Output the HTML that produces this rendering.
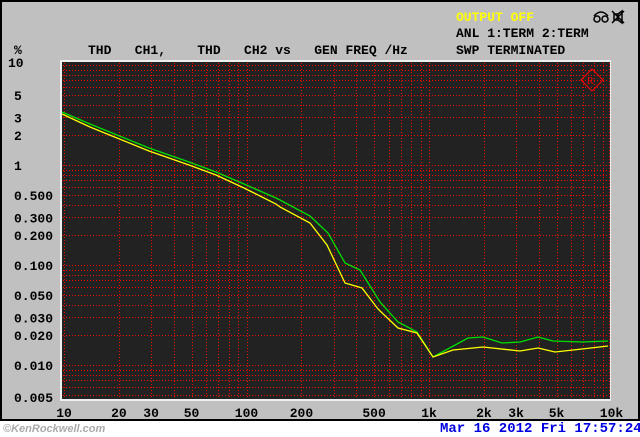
<!DOCTYPE html>
<html><head><meta charset="utf-8"><style>
html,body{margin:0;padding:0;width:640px;height:436px;overflow:hidden;background:#fff}
.t{position:absolute;font-family:"Liberation Mono",monospace;font-weight:bold;font-size:13px;color:#000;white-space:pre;line-height:14px}
</style></head><body>
<div style="position:absolute;left:0;top:0;width:640px;height:421px;background:#000"></div>
<div style="position:absolute;left:2px;top:2px;width:636px;height:417px;background:#c0c0c0"></div>
<svg id="s" width="640" height="436" style="position:absolute;left:0;top:0"></svg>
<div class="t" style="left:456px;top:11px;color:#ffff00">OUTPUT OFF</div>
<div class="t" style="left:456px;top:27px">ANL 1:TERM 2:TERM</div>
<div class="t" style="left:456px;top:44px">SWP TERMINATED</div>
<div class="t" style="left:88px;top:44px">THD   CH1,    THD   CH2 vs   GEN FREQ /Hz</div>
<div class="t" style="left:14px;top:44px">%</div>
<div class="t" style="left:440px;top:422px;color:#0000e0;font-size:14px">Mar 16 2012 Fri 17:57:24</div>
<div class="t" style="left:3px;top:422px;color:#aaa;font-style:italic;font-size:11px;font-family:'Liberation Sans',sans-serif">©KenRockwell.com</div>
<script>
var s=document.getElementById('s'),h='';
function X(f){return 64+182.5*Math.log10(f/10)}
function Y(v){return 65+100*(1-Math.log10(v))}
h+='<defs><pattern id="pv" width="1" height="3" patternUnits="userSpaceOnUse"><rect width="1" height="1" fill="#f00"/></pattern><pattern id="ph" width="3" height="1" patternUnits="userSpaceOnUse"><rect width="1" height="1" fill="#f00"/></pattern></defs>';
h+='<rect x="60" y="60" width="551" height="341" fill="#eee"/><rect x="62" y="62" width="548" height="337" fill="#222"/>';
var fs=[];for(var d=10;d<=1000;d*=10)for(var k=1;k<=9;k++)fs.push(d*k);fs.push(10000);
fs.forEach(function(f){var x=Math.min(609,Math.round(X(f)));h+='<rect x="'+x+'" y="63" width="1" height="336" fill="url(#pv)"/>'});
var vs=[];[0.001,0.01,0.1,1].forEach(function(d){for(var k=1;k<=9;k++){var v=d*k;if(v>=0.005)vs.push(v)}});vs.push(10);
vs.forEach(function(v){var y=Math.min(397,Math.round(Y(v)));h+='<rect x="63" y="'+y+'" width="546" height="1" fill="url(#ph)"/>'});
var g=[[62,112],[90,124],[117,135],[149,148],[189,162],[216,172],[244,184],[276,198],[280,200],[310,216],[328,233],[345,263],[360,270],[380,302],[398,322],[417,332],[433,357],[468,338],[483,337],[502,343],[520,342],[538,337],[553,341],[582,342],[608,341]];
var yl=[[62,114],[90,127],[117,138],[149,151],[189,165],[216,175],[244,188],[276,204],[280,207],[310,223],[327,245],[345,283],[362,288],[378,309],[398,328],[417,333],[433,357],[453,350],[483,347],[520,351],[538,348],[555,352],[582,349],[608,346]];
h+='<polyline fill="none" stroke="#00e000" stroke-width="1.3" points="'+g.join(' ')+'"/>';
h+='<polyline fill="none" stroke="#ffff00" stroke-width="1.3" points="'+yl.join(' ')+'"/>';
h+='<g transform="translate(592,80)" stroke="#f00" fill="none"><path d="M0,-11 L11,0 L0,11 L-11,0 Z"/><text x="-5" y="4" font-size="10" fill="#f00" stroke="none" font-family="Liberation Serif">R</text></g>';
h+='<g stroke="#000" fill="none" stroke-width="1.5"><circle cx="597" cy="19" r="3"/><circle cx="605" cy="19" r="3"/><path d="M594,16 Q601,8 608,16"/><rect x="614" y="14" width="4" height="6"/><path d="M618,14 L622,11 L622,23 L618,20 M612,11 L624,23 M624,11 L612,23"/></g>';
var yls=[[10,'10'],[5,'5'],[3,'3'],[2,'2'],[1,'1'],[0.5,'0.500'],[0.3,'0.300'],[0.2,'0.200'],[0.1,'0.100'],[0.05,'0.050'],[0.03,'0.030'],[0.02,'0.020'],[0.01,'0.010'],[0.005,'0.005']];
yls.forEach(function(p){var y=Y(p[0]);if(p[0]==10)y=62;if(p[0]==0.005)y=397;h+='<text x="'+(p[1].length==2?8:14)+'" y="'+(y+5)+'" font-family="Liberation Mono" font-weight="bold" font-size="13">'+p[1]+'</text>'});
var xls=[[10,'10'],[20,'20'],[30,'30'],[50,'50'],[100,'100'],[200,'200'],[500,'500'],[1000,'1k'],[2000,'2k'],[3000,'3k'],[5000,'5k'],[10000,'10k']];
xls.forEach(function(p){h+='<text x="'+X(p[0])+'" y="417" text-anchor="middle" font-family="Liberation Mono" font-weight="bold" font-size="13">'+p[1]+'</text>'});
s.innerHTML=h;
</script>
</body></html>
